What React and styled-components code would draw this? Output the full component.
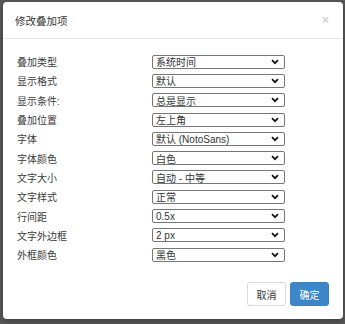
import React from 'react';
import styled, { createGlobalStyle } from 'styled-components';

const GlobalStyle = createGlobalStyle`
  html, body {
    margin: 0;
    padding: 0;
    background: #585858;
  }
  body {
    font-family: "Liberation Sans", "Noto Sans CJK SC", sans-serif;
  }
`;

const fields = [
  { label: '叠加类型', value: '系统时间' },
  { label: '显示格式', value: '默认' },
  { label: '显示条件:', value: '总是显示' },
  { label: '叠加位置', value: '左上角' },
  { label: '字体', value: '默认 (NotoSans)' },
  { label: '字体颜色', value: '白色' },
  { label: '文字大小', value: '自动 - 中等' },
  { label: '文字样式', value: '正常' },
  { label: '行间距', value: '0.5x' },
  { label: '文字外边框', value: '2 px' },
  { label: '外框颜色', value: '黑色' },
];

const App = () => (
  <Backdrop>
    <GlobalStyle />
    <Modal>
      <Header>
        <Title>修改叠加项</Title>
        <Close aria-label="close">×</Close>
      </Header>
      <Body>
        {fields.map(f => (
          <Row key={f.label}>
            <Label>{f.label}</Label>
            <SelectBox>
              <span>{f.value}</span>
              <svg width="8" height="6" viewBox="0 0 8 6">
                <path d="M1 1.2 L4 4.2 L7 1.2" fill="none" stroke="#111" strokeWidth="1.7" />
              </svg>
            </SelectBox>
          </Row>
        ))}
      </Body>
      <Footer>
        <Button>取消</Button>
        <Button primary>确定</Button>
      </Footer>
    </Modal>
  </Backdrop>
);

const Backdrop = styled.div({
  width: 345,
  height: 324,
  padding: '2px 2px 5px 3px',
  boxSizing: 'border-box',
  overflow: 'hidden',
});

const Modal = styled.div({
  width: 340,
  height: 317,
  background: '#fff',
  borderRadius: 4,
  display: 'flex',
  flexDirection: 'column',
  boxShadow: '0 2px 6px rgba(0,0,0,0.3)',
});

const Header = styled.div({
  height: 37,
  borderBottom: '1px solid #e8e8e8',
  display: 'flex',
  alignItems: 'center',
  justifyContent: 'space-between',
  padding: '0 14px 0 12px',
  boxSizing: 'border-box',
});

const Title = styled.div({
  fontSize: 10.5,
  color: '#333',
});

const Close = styled.span({
  fontSize: 12,
  color: '#cfcfcf',
  fontWeight: 'bold',
  lineHeight: 1,
});

const Body = styled.div({
  padding: '13px 0 0 14px',
});

const Row = styled.div({
  height: 19.3,
  display: 'flex',
  alignItems: 'center',
});

const Label = styled.div({
  width: 135,
  fontSize: 10,
  color: '#3a3a3a',
});

const SelectBox = styled.div({
  width: 133,
  height: 14,
  boxSizing: 'border-box',
  border: '1px solid #767676',
  borderRadius: 2,
  display: 'flex',
  alignItems: 'center',
  justifyContent: 'space-between',
  padding: '0 5px 0 3px',
  fontSize: 10,
  color: '#333',
  background: '#fff',
});

const Footer = styled.div({
  marginTop: 'auto',
  display: 'flex',
  justifyContent: 'flex-end',
  gap: 4,
  padding: '0 14px 13px 0',
});

const Button = styled.div(({ primary }) => ({
  width: 39,
  height: 24,
  boxSizing: 'border-box',
  borderRadius: 3,
  display: 'flex',
  alignItems: 'center',
  justifyContent: 'center',
  fontSize: 10,
  color: primary ? '#fff' : '#333',
  background: primary ? '#3d87c9' : '#fff',
  border: primary ? '1px solid #3a80bf' : '1px solid #dadada',
}));

export default App;
